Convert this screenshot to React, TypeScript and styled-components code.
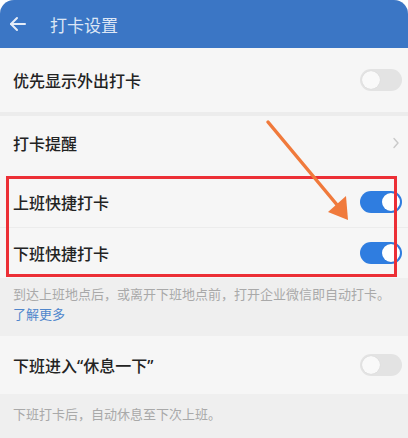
import React from "react";
import styled, { createGlobalStyle } from "styled-components";

const BLUE = "#3b76c5";
const TOGGLE_BLUE = "#2f7de0";
const TEXT = "#232323";
const GRAY_TEXT = "#a9a9a9";
const RED = "#ec2f36";
const ORANGE = "#f07a3c";

const GlobalStyle = createGlobalStyle`
  html, body {
    margin: 0;
    padding: 0;
    background: #ffffff;
  }
  body {
    font-family: "Noto Sans CJK SC", "Noto Sans", sans-serif;
  }
`;

const Page = styled.div`
  position: relative;
  width: 408px;
  height: 438px;
  overflow: hidden;
  background: #efefef;
  border-radius: 14px 14px 0 0;
`;

const Header = styled.div`
  height: 48px;
  background: ${BLUE};
  display: flex;
  align-items: center;
  padding-left: 8px;
  gap: 22px;
  color: #dce6f5;
  font-size: 17px;
`;

const Row = styled.div<{ $h: number; $shift?: number }>`
  height: ${(p) => p.$h}px;
  box-sizing: border-box;
  padding: 0 6px ${(p) => p.$shift ?? 0}px 13px;
  background: #f6f6f6;
  display: flex;
  align-items: center;
  justify-content: space-between;
  color: ${TEXT};
  font-size: 16px;
  font-weight: 500;
`;

const Label = styled.span`
  font-family: "Noto Sans", "Noto Sans CJK SC", sans-serif;
`;

const Divider = styled.div<{ $h: number }>`
  height: ${(p) => p.$h}px;
  background: #ececec;
`;

const Highlight = styled.div`
  position: relative;
  &::after {
    content: "";
    position: absolute;
    top: 0;
    bottom: 1px;
    left: 6px;
    right: 11px;
    border: 3px solid ${RED};
    pointer-events: none;
  }
`;

const Note = styled.div<{ $pt: number; $pb: number }>`
  padding: ${(p) => p.$pt}px 12px ${(p) => p.$pb}px 13px;
  font-size: 13px;
  line-height: 20px;
  color: ${GRAY_TEXT};
`;

const Link = styled.span`
  color: #4f86cc;
`;

const Track = styled.div<{ $on: boolean }>`
  position: relative;
  width: 42px;
  height: 22px;
  border-radius: 11px;
  background: ${(p) => (p.$on ? TOGGLE_BLUE : "#e3e3e3")};
  flex-shrink: 0;
`;

const Knob = styled.div<{ $on: boolean }>`
  position: absolute;
  top: 2px;
  left: ${(p) => (p.$on ? "22px" : "2px")};
  width: 18px;
  height: 18px;
  border-radius: 50%;
  background: ${(p) => (p.$on ? "#ffffff" : "#f9f9f9")};
  box-shadow: 0 0 1px rgba(0, 0, 0, 0.12);
`;

const Chevron = styled.svg`
  margin-right: 2px;
`;

const Annotation = styled.svg`
  position: absolute;
  left: 0;
  top: 0;
  pointer-events: none;
`;

const Toggle: React.FC<{ on?: boolean }> = ({ on = false }) => (
  <Track $on={on}>
    <Knob $on={on} />
  </Track>
);

const BackArrow = () => (
  <svg width="20" height="20" viewBox="0 0 20 20" fill="none" stroke="#e6edf8" strokeWidth="2" strokeLinecap="round" strokeLinejoin="round">
    <path d="M17 10H3" />
    <path d="M9 4l-6 6 6 6" />
  </svg>
);

export default function App() {
  return (
    <>
      <GlobalStyle />
      <Page>
        <Header>
          <BackArrow />
          <span>打卡设置</span>
        </Header>

        <Row $h={64}>
          <span>优先显示外出打卡</span>
          <Toggle />
        </Row>
        <Divider $h={4} />
        <Row $h={60} $shift={6}>
          <span>打卡提醒</span>
          <Chevron width="8" height="12" viewBox="0 0 8 12" fill="none" stroke="#c9c9c9" strokeWidth="1.4" strokeLinecap="round" strokeLinejoin="round">
            <path d="M2 1.5l4 4.5-4 4.5" />
          </Chevron>
        </Row>

        <Highlight>
          <Row $h={51}>
            <span>上班快捷打卡</span>
            <Toggle on />
          </Row>
          <Divider $h={1} />
          <Row $h={50}>
            <span>下班快捷打卡</span>
            <Toggle on />
          </Row>
        </Highlight>

        <Note $pt={6} $pb={12}>
          到达上班地点后，或离开下班地点前，打开企业微信即自动打卡。
          <br />
          <Link>了解更多</Link>
        </Note>

        <Row $h={58}>
          <Label>下班进入“休息一下”</Label>
          <Toggle />
        </Row>

        <Note $pt={10} $pb={10}>下班打卡后，自动休息至下次上班。</Note>

        <Annotation width="408" height="438" viewBox="0 0 408 438">
          <line x1="268" y1="122" x2="338" y2="206" stroke={ORANGE} strokeWidth="3.5" strokeLinecap="round" />
          <polygon points="348,220 328,212 346,196" fill={ORANGE} />
        </Annotation>
      </Page>
    </>
  );
}
